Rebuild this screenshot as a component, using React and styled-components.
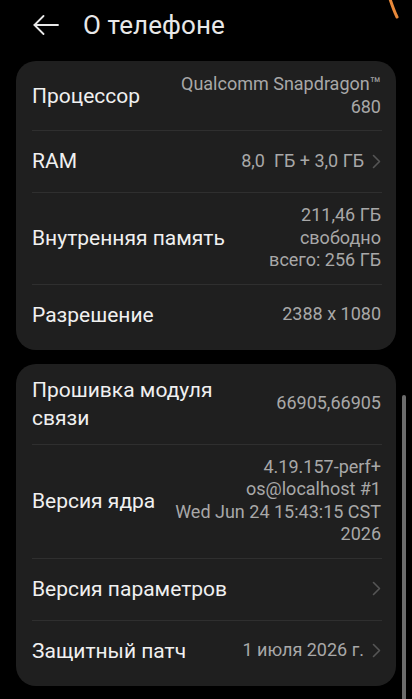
import React from 'react'
import styled, { createGlobalStyle } from 'styled-components'

const GlobalStyle = createGlobalStyle`
    html, body {
        margin: 0;
        padding: 0;
        background: #000;
        overflow: hidden;
    }
    body {
        font-family: Roboto, 'Noto Sans', sans-serif;
        -webkit-font-smoothing: antialiased;
    }
`

const sections = [
    [
        { label: ['Процессор'], value: ['Qualcomm Snapdragon™', '680'] },
        { label: ['RAM'], value: ['8,0  ГБ + 3,0 ГБ'], arrow: true },
        { label: ['Внутренняя память'], value: ['211,46 ГБ', 'свободно', 'всего: 256 ГБ'] },
        { label: ['Разрешение'], value: ['2388 x 1080'] },
    ],
    [
        { label: ['Прошивка модуля', 'связи'], value: ['66905,66905'] },
        { label: ['Версия ядра'], value: ['4.19.157-perf+', 'os@localhost #1', 'Wed Jun 24 15:43:15 CST', '2026'] },
        { label: ['Версия параметров'], value: [], arrow: true },
        { label: ['Защитный патч'], value: ['1 июля 2026 г.'], arrow: true },
    ],
]

const Screen = styled.div`
    position: relative;
    width: 412px;
    height: 699px;
    background: #000;
    overflow: hidden;
`

const Header = styled.header`
    display: flex;
    align-items: center;
    gap: 24px;
    height: 50px;
    padding: 0 0 0 33px;
`

const Title = styled.h1`
    margin: 0;
    font-size: 26px;
    font-weight: 400;
    color: #e8e8e8;
    letter-spacing: 0.1px;
`

const Cards = styled.div`
    display: flex;
    flex-direction: column;
    gap: 14px;
    padding: 11px 16px 0;
`

const Card = styled.section`
    background: #1f1f1f;
    border-radius: 20px;
    padding: 0 0 4px;
`

const Row = styled.div`
    display: flex;
    align-items: center;
    justify-content: space-between;
    gap: 12px;
    min-height: 62px;
    box-sizing: border-box;
    padding: 12px 15px 12px 16px;
    position: relative;
    & + &::before {
        content: '';
        position: absolute;
        top: 0;
        left: 16px;
        right: 14px;
        height: 1px;
        background: #2f2f2f;
    }
`

const Label = styled.div`
    font-size: 21px;
    line-height: 28px;
    color: #f0f0f0;
    white-space: nowrap;
`

const Right = styled.div`
    display: flex;
    align-items: center;
    gap: 8px;
`

const Value = styled.div`
    font-size: 18px;
    font-weight: 400;
    line-height: 22.5px;
    color: #a8a8a8;
    text-align: right;
    white-space: pre;
`

const Scrollbar = styled.div`
    position: absolute;
    right: 6px;
    top: 395px;
    bottom: 0;
    width: 4px;
    border-radius: 2px 2px 0 0;
    background: #6c6c6c;
`

const Mark = styled.svg`
    position: absolute;
    right: 9px;
    top: -2px;
`

const BackArrow = () => (
    <svg width="26" height="20" viewBox="0 0 26 20" fill="none" stroke="#e8e8e8" strokeWidth="1.8" strokeLinecap="round" strokeLinejoin="round">
        <path d="M25 10H1.5" />
        <path d="M10.5 1L1.5 10l9 9" />
    </svg>
)

const Chevron = () => (
    <svg width="9" height="15" viewBox="0 0 9 15" fill="none" stroke="#555" strokeWidth="1.6" strokeLinecap="round" strokeLinejoin="round">
        <path d="M1.5 1.5l6 6-6 6" />
    </svg>
)

const Item = ({ item }) => (
    <Row>
        <Label>
            {item.label.map((l, i) => <div key={i}>{l}</div>)}
        </Label>
        <Right>
            {item.value.length > 0 && (
                <Value>
                    {item.value.map((v, i) => <div key={i}>{v}</div>)}
                </Value>
            )}
            {item.arrow && <Chevron />}
        </Right>
    </Row>
)

export default function App() {
    return (
        <Screen>
            <GlobalStyle />
            <Header>
                <BackArrow />
                <Title>О телефоне</Title>
            </Header>
            <Cards>
                {sections.map((items, i) => (
                    <Card key={i}>
                        {items.map((item, j) => <Item key={j} item={item} />)}
                    </Card>
                ))}
            </Cards>
            <Scrollbar />
            <Mark width="16" height="24" viewBox="0 0 16 24">
                <path d="M3 1 C5 7, 7 13, 10 19" stroke="#e8893a" strokeWidth="3" strokeLinecap="round" fill="none" />
            </Mark>
        </Screen>
    )
}
